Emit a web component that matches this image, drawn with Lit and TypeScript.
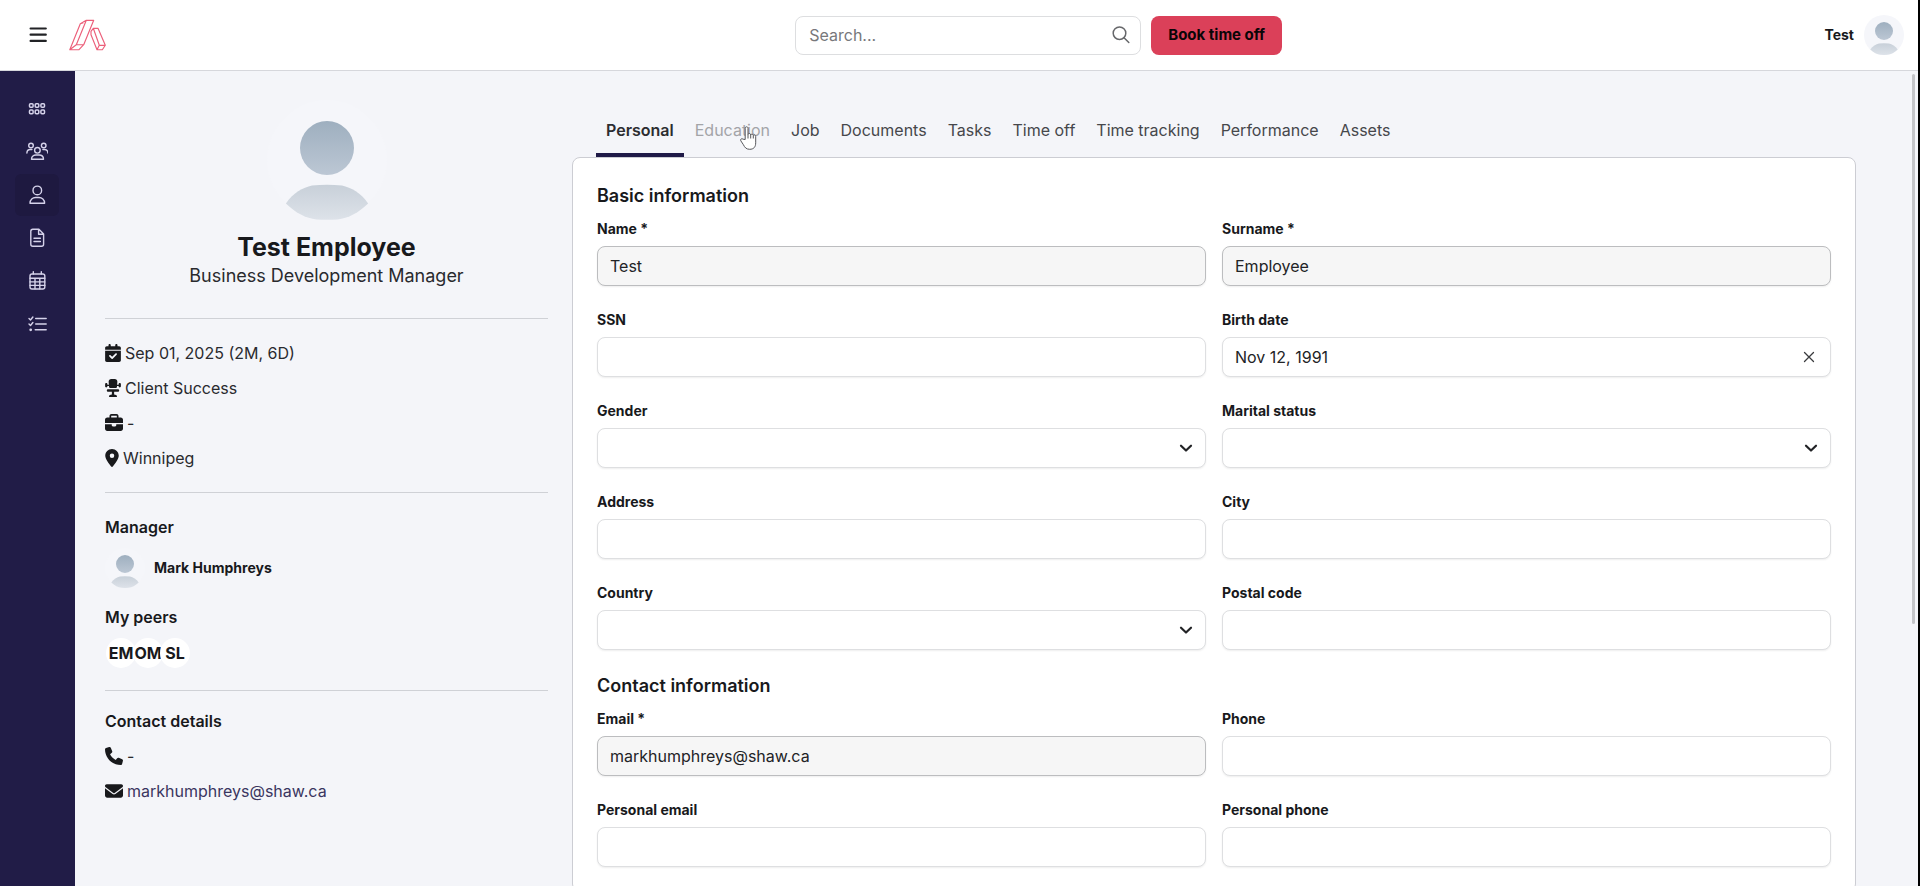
import { LitElement, html, css, svg } from "lit";
import { customElement, property } from "lit/decorators.js";
import { classMap } from "lit/directives/class-map.js";

const solid: Record<string, { w: number; d: string }> = {
  calendar: {
    w: 448,
    d: "M128 0c17.7 0 32 14.3 32 32V64H288V32c0-17.7 14.3-32 32-32s32 14.3 32 32V64h48c26.5 0 48 21.5 48 48v48H0V112C0 85.5 21.5 64 48 64H96V32c0-17.7 14.3-32 32-32zM0 192H448V464c0 26.5-21.5 48-48 48H48c-26.5 0-48-21.5-48-48V192zM329 305c9.4-9.4 9.4-24.6 0-33.9s-24.6-9.4-33.9 0l-95 95-47-47c-9.4-9.4-24.6-9.4-33.9 0s-9.4 24.6 0 33.9l64 64c9.4 9.4 24.6 9.4 33.9 0L329 305z",
  },
  chair: {
    w: 448,
    d: "M176 0h96c44 0 80 36 76 80l-12 150c-2 20-10 26-28 26H140c-18 0-26-6-28-26L100 80C96 36 132 0 176 0zM32 112c18 0 32 14 32 32v64c0 18-14 32-32 32S0 226 0 208v-64c0-18 14-32 32-32zM416 112c18 0 32 14 32 32v64c0 18-14 32-32 32s-32-14-32-32v-64c0-18 14-32 32-32zM48 160h70v40H48zM330 160h70v40h-70zM90 288H358c26 0 42 16 42 36s-16 36-42 36H256v82c40 4 76 18 82 42 4 18-8 28-24 28H134c-16 0-28-10-24-28 6-24 42-38 82-42v-82H90c-26 0-42-16-42-36s16-36 42-36z",
  },
  briefcase: {
    w: 512,
    d: "M184 48H328c4.4 0 8 3.6 8 8V96H176V56c0-4.4 3.6-8 8-8zm-56 8V96H64C28.7 96 0 124.7 0 160v96H192 320 512V160c0-35.3-28.7-64-64-64H384V56c0-30.9-25.1-56-56-56H184c-30.9 0-56 25.1-56 56zM512 288H320v32c0 17.7-14.3 32-32 32H224c-17.7 0-32-14.3-32-32V288H0V416c0 35.3 28.7 64 64 64H448c35.3 0 64-28.7 64-64V288z",
  },
  pin: {
    w: 384,
    d: "M215.7 499.2C267 435 384 279.4 384 192C384 86 298 0 192 0S0 86 0 192c0 87.4 117 243 168.3 307.2c12.3 15.3 35.1 15.3 47.4 0zM192 128a64 64 0 1 1 0 128 64 64 0 1 1 0-128z",
  },
  phone: {
    w: 512,
    d: "M164.9 24.6c-7.7-18.6-28-28.5-47.4-23.2l-88 24C12.1 30.2 0 46 0 64C0 311.4 200.6 512 448 512c18 0 33.8-12.1 38.6-29.5l24-88c5.3-19.4-4.6-39.7-23.2-47.4l-96-40c-16.3-6.8-35.2-2.1-46.3 11.6L304.7 368C234.3 334.7 177.3 277.7 144 207.3L193.3 167c13.7-11.2 18.4-30 11.6-46.3l-40-96z",
  },
  envelope: {
    w: 512,
    d: "M48 64C21.5 64 0 85.5 0 112c0 15.1 7.1 29.3 19.2 38.4L236.8 313.6c11.4 8.5 27 8.5 38.4 0L492.8 150.4c12.1-9.1 19.2-23.3 19.2-38.4c0-26.5-21.5-48-48-48H48zM0 176V384c0 35.3 28.7 64 64 64H448c35.3 0 64-28.7 64-64V176L294.4 339.2c-22.8 17.1-54 17.1-76.8 0L0 176z",
  },
};

const solidIcon = (name: string) => {
  const icon = solid[name];
  return html`<svg viewBox="0 0 ${icon.w} 512" width=${Math.round((icon.w / 512) * 18)} height="18" fill="currentColor" aria-hidden="true"><path d=${icon.d}></path></svg>`;
};

const avatar = (size: number) => html`
  <svg viewBox="0 0 40 40" width=${size} height=${size} aria-hidden="true">
    <defs>
      <linearGradient id="head" x1="0" y1="0" x2="0" y2="1"><stop offset="0" stop-color="#9eafbf"></stop><stop offset="1" stop-color="#bcc7d4"></stop></linearGradient>
      <linearGradient id="bust" x1="0" y1="0" x2="0" y2="1"><stop offset="0" stop-color="#c8d0d9"></stop><stop offset="1" stop-color="#dde2e9"></stop></linearGradient>
    </defs>
    <circle cx="20" cy="20" r="20" fill="#f5f6fa"></circle>
    <circle cx="20" cy="16" r="9" fill="url(#head)"></circle>
    <path d="M6.3 34.5C8.6 31 12 29.2 15 28.500Q20 28 25 28.500C28 29.2 31.400 31 33.700 34.500C30.500 37.600 27 39.500 23.500 39.800Q20 40.100 16.500 39.800C13 39.500 9.500 37.600 6.300 34.500Z" fill="url(#bust)"></path>
  </svg>`;

const navIcons = [
  { label: "Dashboard", art: svg`<g stroke-width="1.5"><rect x="3.500" y="5.700" width="3.600" height="3.600" rx="1"/><rect x="9.200" y="5.700" width="3.600" height="3.600" rx="1"/><rect x="14.900" y="5.700" width="3.600" height="3.600" rx="1"/><rect x="3.500" y="12.100" width="3.600" height="3.600" rx="1"/><rect x="9.200" y="12.100" width="3.600" height="3.600" rx="1"/><rect x="14.900" y="12.100" width="3.600" height="3.600" rx="1"/></g>` },
  { label: "People", art: svg`<circle cx="5" cy="4.500" r="2.300"/><circle cx="17.700" cy="4.500" r="2.300"/><circle cx="11.400" cy="9.300" r="2.800"/><path d="M5.500 18.200h12c0-3-2.300-4.200-4.500-4.200h-3c-2.200 0-4.500 1.200-4.500 4.200ZM.9 12c.1-2.400 1.600-3.500 3.300-3.500h1.700M21.900 12c-.1-2.400-1.600-3.500-3.300-3.500h-1.700"/>` },
  { label: "Profile", art: svg`<circle cx="11.300" cy="6.400" r="4.300"/><path d="M4 19.300h14.600c.1-4-2.800-5.800-5.600-5.800H9.600C6.800 13.500 3.900 15.300 4 19.300Z"/>` },
  { label: "Documents", art: svg`<path d="M6.800 2.300h6.100l4.700 4.700v10.300a2 2 0 0 1-2 2H6.800a2 2 0 0 1-2-2v-13a2 2 0 0 1 2-2ZM12.600 2.500v4.800h4.800M8 11.200h6.400M8 14.500h6.400"/>` },
  { label: "Calendar", art: svg`<rect x="4" y="4" width="14.800" height="15" rx="2"/><path d="M7.300 1.600v2.400M15.300 1.600v2.400M4 8.300h14.800M4 11.900h14.800M4 15.400h14.800M9 8.300v10.500M13.800 8.300v10.500"/>` },
  { label: "Tasks", art: svg`<path d="M3 5.500l1.500 1.500 2.400-3M3 11l1.500 1.500 2.400-3M9.700 5.500h10.500M9.700 11h10.500M9.200 16.800h11"/><circle cx="4.700" cy="16.800" r=".7"/>` },
];

type Kind = "text" | "locked" | "select" | "date";
interface FieldData {
  label: string;
  kind: Kind;
  value?: string;
}

const basic: FieldData[] = [
  { label: "Name *", kind: "locked", value: "Test" },
  { label: "Surname *", kind: "locked", value: "Employee" },
  { label: "SSN", kind: "text" },
  { label: "Birth date", kind: "date", value: "Nov 12, 1991" },
  { label: "Gender", kind: "select" },
  { label: "Marital status", kind: "select" },
  { label: "Address", kind: "text" },
  { label: "City", kind: "text" },
  { label: "Country", kind: "select" },
  { label: "Postal code", kind: "text" },
];

const contact: FieldData[] = [
  { label: "Email *", kind: "locked", value: "markhumphreys@shaw.ca" },
  { label: "Phone", kind: "text" },
  { label: "Personal email", kind: "text" },
  { label: "Personal phone", kind: "text" },
];

@customElement("form-field")
export class FormField extends LitElement {
  @property({ attribute: false }) field!: FieldData;

  static styles = css`
    :host { display: block; min-width: 0; }
    * { box-sizing: border-box; }
    .label { display: block; margin-bottom: 7px; font-size: 14px; line-height: 20px; font-weight: 700; color: #18191c; }
    .control { position: relative; display: flex; }
    .box {
      width: 100%; height: 40px; padding: 0 12px; margin: 0;
      border: 1px solid #dedfe1; border-radius: 8px; background: #fff;
      box-shadow: 0 1px 2px rgba(0, 0, 0, 0.07);
      font: inherit; font-size: 16px; color: #222326; outline: none; appearance: none;
    }
    .locked { background: #f6f6f6; border-color: #bcbdbf; }
    .mark { position: absolute; right: 14px; top: 12px; width: 16px; height: 16px; display: flex; padding: 0; border: 0; background: none; color: #3a3b3e; }
    .passive { right: 12px; pointer-events: none; color: #222326; }
  `;

  render() {
    const { label, kind, value = "" } = this.field;
    return html`
      <label class="label" for="control">${label}</label>
      <div class="control">
        ${kind === "select"
          ? html`<select class="box" id="control"><option></option></select>
              <span class="mark passive"><svg viewBox="0 0 16 16" width="16" height="16" fill="none" stroke="currentColor" stroke-width="2.2" stroke-linecap="round" stroke-linejoin="round"><path d="M3 5.700 8 10.500l5-4.800"></path></svg></span>`
          : html`<input class=${classMap({ box: true, locked: kind === "locked" })} id="control" type="text" .value=${value} ?readonly=${kind === "locked"} />`}
        ${kind === "date"
          ? html`<button class="mark" type="button" aria-label="Clear date"><svg viewBox="0 0 16 16" width="16" height="16" fill="none" stroke="currentColor" stroke-width="1.300" stroke-linecap="round"><path d="M3.500 3.500l9 9M12.500 3.500l-9 9"></path></svg></button>`
          : ""}
      </div>
    `;
  }
}

@customElement("app-root")
export class AppRoot extends LitElement {
  static styles = css`
    :host {
      display: flex; flex-direction: column; height: 100vh; overflow: hidden;
      box-sizing: border-box; border-right: 2px solid #000;
      background: #f4f5f9; color: #18191c;
      font-family: Inter, "Noto Sans", sans-serif; font-size: 16px; line-height: 24px;
    }
    * { box-sizing: border-box; }
    svg { display: block; flex: none; }
    button { font: inherit; color: inherit; border: 0; padding: 0; background: none; }
    a { color: inherit; text-decoration: none; }

    .topbar { flex: none; display: grid; grid-template-columns: 21fr auto 17fr; align-items: center; height: 71px; padding: 0 14px 0 27px; background: #fff; border-bottom: 1px solid #d6d7dc; }
    .brand { display: flex; align-items: center; gap: 20px; }
    .actions { display: flex; align-items: center; gap: 10px; }
    .search { position: relative; }
    .query { display: block; width: 346px; height: 39px; padding: 0 42px 0 13px; border: 1px solid #dddee0; border-radius: 8px; font: inherit; background: #fff; outline: none; }
    .query::placeholder { color: #77787b; opacity: 1; }
    .lens { position: absolute; right: 10px; top: 9px; }
    .book { height: 39px; padding: 0 17px; border-radius: 8px; background: #db4059; color: #0a0507; font-size: 15px; font-weight: 700; }
    .account { justify-self: end; display: flex; align-items: center; gap: 10px; font-size: 14px; font-weight: 700; }

    .body { flex: 1; min-height: 0; display: flex; }
    .rail { flex: none; width: 75px; padding: 17px 1px 0 0; background: #211c47; display: flex; flex-direction: column; align-items: center; gap: 1px; }
    .rail-link { display: flex; align-items: center; justify-content: center; width: 44px; height: 42px; border-radius: 6px; color: #d5d2ea; }
    .rail-link.active { background: #1e1940; }

    .main { flex: 1; min-width: 0; position: relative; display: flex; padding: 29px 62px 0 30px; overflow: hidden; }
    .thumb { position: absolute; right: 3px; top: 3px; width: 3px; height: 550px; border-radius: 2px; background: #c3c4c8; }

    .profile { flex: none; width: 443px; margin-right: 24px; color: #292a2e; }
    .hero { display: flex; flex-direction: column; align-items: center; padding-bottom: 28px; border-bottom: 1px solid #cfd1d6; }
    .name { margin: 12px 0 0; font-size: 25px; line-height: 30px; font-weight: 700; color: #18191c; }
    .role { margin: 0; font-size: 18px; line-height: 28px; }
    .group { padding: 22px 0; border-bottom: 1px solid #cfd1d6; }
    .group.last { padding-top: 18px; border-bottom: 0; }
    .facts { display: flex; flex-direction: column; gap: 11px; list-style: none; margin: 0; padding: 0; }
    .facts.after { margin-top: 11px; }
    .fact { display: flex; align-items: center; gap: 4px; }
    .fact svg { color: #18191c; }
    .mail { color: #3a3560; }
    .heading { margin: 0; font-size: 16px; line-height: 24px; font-weight: 600; color: #18191c; }
    .manager { display: flex; align-items: center; gap: 9px; margin: 9px 0 17px; font-size: 14px; font-weight: 700; color: #18191c; }
    .peers { display: flex; margin-top: 9px; padding-left: 1px; font-weight: 700; color: #18191c; }
    .peer { width: 30px; height: 30px; margin-right: -3px; border-radius: 50%; background: #fff; display: flex; align-items: center; justify-content: center; }

    .content { flex: 1; min-width: 0; padding-top: 6px; }
    .tabs { display: flex; gap: 1px; padding: 0 24px; }
    .tab { position: relative; height: 51px; padding: 0 10px; border-bottom: 4px solid transparent; color: #46474b; }
    .tab.active { font-weight: 600; border-bottom-color: #1f1a47; color: #2c2d31; }
    .tab.faded { color: #a3a4a8; }
    .pointer { position: absolute; left: 55px; top: 20px; }
    .card { padding: 24px; border: 1px solid #cccdd3; border-radius: 8px; background: #fff; }
    .title { margin: 0 0 9px; font-size: 18px; line-height: 28px; font-weight: 600; }
    .fields { display: grid; grid-template-columns: 1fr 1fr; gap: 24px 16px; }
    .fields + .title { margin-top: 22px; }
  `;

  private tabs = ["Personal", "Education", "Job", "Documents", "Tasks", "Time off", "Time tracking", "Performance", "Assets"];

  private section(title: string, fields: FieldData[]) {
    return html`
      <h2 class="title">${title}</h2>
      <div class="fields">${fields.map((f) => html`<form-field .field=${f}></form-field>`)}</div>
    `;
  }

  private pointer() {
    return html`<svg class="pointer" viewBox="0 0 18 25" width="18" height="25" fill="#fff" stroke="#55565a" stroke-width="1" stroke-linejoin="round" aria-hidden="true">
      <path d="M5.200 13.500V2.300c0-2 2.800-2 2.800 0v6.200c.3-1.500 2.700-1.300 2.700.4 .4-1.300 2.600-1 2.600.7 .5-1.100 2.400-.8 2.400 1v6.200c0 4.200-2 6.500-6 6.500-3.600 0-5-2-6.300-4.600L.8 14.800c-.8-1.700 1-2.700 2.300-1.600Z"></path>
      <path d="M8 8.500v4M10.700 9v3.500M13.300 9.800v2.700"></path>
    </svg>`;
  }

  render() {
    return html`
      <header class="topbar">
        <div class="brand">
          <button type="button" aria-label="Menu"><svg viewBox="0 0 22 22" width="22" height="22" stroke="#222326" stroke-width="2.200" stroke-linecap="round"><path d="M3.600 4.500h15.200M3.600 10.700h15.200M3.600 16.900h15.200"></path></svg></button>
          <a href="#" aria-label="Home">
            <svg viewBox="0 0 38 32" width="38" height="32" fill="none" stroke="#ec5f7a" stroke-width="1.150" stroke-linejoin="round">
              <path d="M.8 30.700 11.300 4.700 17.300 1.300H24.700L14.700 25.700 10 30.700ZM17.300 1.300 7.300 25.700H14.700M7.300 25.700 .8 30.700M11.300 4.700 14.500 3.800M10 30.700 14.700 25.700"></path>
              <path d="M22 12.300 24.300 9.300H29L36.300 26.300 33.300 30.700H28L22 15.700ZM24.300 9.300 30.300 26.300H36.300M30.300 26.300 28 30.700"></path>
            </svg>
          </a>
        </div>
        <div class="actions">
          <div class="search">
            <input class="query" type="search" placeholder="Search..." aria-label="Search" />
            <svg class="lens" viewBox="0 0 20 20" width="20" height="20" fill="none" stroke="#66676a" stroke-width="1.500" stroke-linecap="round" aria-hidden="true"><circle cx="8.500" cy="8.200" r="6.300"></circle><path d="M13 12.800 17.800 17.500"></path></svg>
          </div>
          <button class="book" type="button">Book time off</button>
        </div>
        <div class="account"><span>Test</span>${avatar(40)}</div>
      </header>
      <div class="body">
        <nav class="rail" aria-label="Main">
          ${navIcons.map(
            (n) => html`<a href="#" class=${classMap({ "rail-link": true, active: n.label === "Profile" })} aria-label=${n.label}>
              <svg viewBox="0 0 22 22" width="22" height="22" fill="none" stroke="currentColor" stroke-width="1.400" stroke-linecap="round" stroke-linejoin="round">${n.art}</svg>
            </a>`
          )}
        </nav>
        <main class="main">
          <aside class="profile">
            <div class="hero">
              ${avatar(120)}
              <h1 class="name">Test Employee</h1>
              <p class="role">Business Development Manager</p>
            </div>
            <div class="group">
              <ul class="facts">
                <li class="fact">${solidIcon("calendar")}<span>Sep 01, 2025 (2M, 6D)</span></li>
                <li class="fact">${solidIcon("chair")}<span>Client Success</span></li>
                <li class="fact">${solidIcon("briefcase")}<span>-</span></li>
                <li class="fact">${solidIcon("pin")}<span>Winnipeg</span></li>
              </ul>
            </div>
            <div class="group">
              <h2 class="heading">Manager</h2>
              <div class="manager">${avatar(40)}<span>Mark Humphreys</span></div>
              <h2 class="heading">My peers</h2>
              <div class="peers">${["EM", "OM", "SL"].map((p) => html`<span class="peer">${p}</span>`)}</div>
            </div>
            <div class="group last">
              <h2 class="heading">Contact details</h2>
              <ul class="facts after">
                <li class="fact">${solidIcon("phone")}<span>-</span></li>
                <li class="fact">${solidIcon("envelope")}<a class="mail" href="mailto:markhumphreys@shaw.ca">markhumphreys@shaw.ca</a></li>
              </ul>
            </div>
          </aside>
          <section class="content">
            <div class="tabs">
              ${this.tabs.map(
                (t, i) => html`<button type="button" class=${classMap({ tab: true, active: i === 0, faded: i === 1 })}>${t}${i === 1 ? this.pointer() : ""}</button>`
              )}
            </div>
            <form class="card">
              ${this.section("Basic information", basic)}
              ${this.section("Contact information", contact)}
            </form>
          </section>
          <div class="thumb"></div>
        </main>
      </div>
    `;
  }
}
